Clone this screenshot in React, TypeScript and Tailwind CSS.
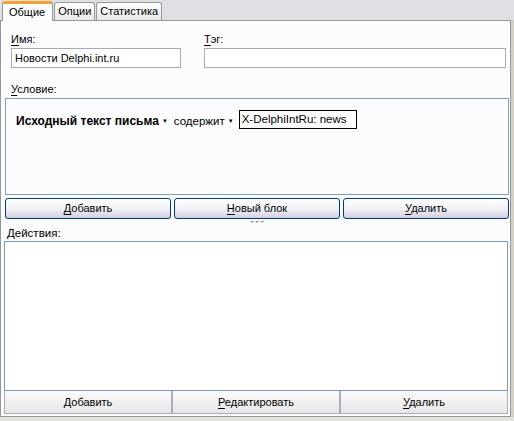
import React from "react";

// Small helper: underlines the mnemonic letter of a label.
function Hot({ k, rest }: { k: string; rest: string }) {
  return (
    <span>
      <span className="underline underline-offset-[2px]">{k}</span>
      {rest}
    </span>
  );
}

function XpButton({ k, rest }: { k: string; rest: string }) {
  return (
    <button
      type="button"
      className="flex-1 h-[21px] rounded-[3px] border border-[#003c74] bg-gradient-to-b from-white via-[#f2f2f6] to-[#d2cfe2] text-[11px] text-black leading-none"
    >
      <Hot k={k} rest={rest} />
    </button>
  );
}

function FlatButton({ k, rest, last }: { k: string; rest: string; last?: boolean }) {
  return (
    <button
      type="button"
      className={[
        "flex-1 h-full bg-gradient-to-b from-[#fbfbfb] to-[#e6e6e8] text-[11px] text-black leading-none",
        last ? "" : "border-r-2 border-[#a6adbd]",
      ].join(" ")}
    >
      <Hot k={k} rest={rest} />
    </button>
  );
}

function Tab({ label, active }: { label: string; active?: boolean }) {
  if (active) {
    return (
      <div className="relative z-10 h-[20px] pl-[6px] pr-[7px] -mb-px bg-[#fcfcfe] border-x border-[#919b9c] border-t-[3px] border-t-[#f5a330] rounded-t-[3px] flex items-center text-[11px]">
        {label}
      </div>
    );
  }
  return (
    <div className="h-[18px] px-[3px] bg-gradient-to-b from-white to-[#e8e8ea] border border-[#919b9c] border-b-0 rounded-t-[3px] flex items-center text-[11px]">
      {label}
    </div>
  );
}

export default function App() {
  return (
    <div
      className="w-[514px] h-[421px] bg-[#e0dfe3] flex flex-col text-black"
      style={{ fontFamily: '"Liberation Sans", Arial, sans-serif' }}
    >
      <div className="h-[20px] pl-[2px] flex items-end gap-px">
        <Tab label="Общие" active />
        <Tab label="Опции" />
        <Tab label="Статистика" />
      </div>

      <div className="flex-1 flex">
        <div className="w-[511px] h-[397px] border border-[#919b9c] bg-[#fcfcfe] flex flex-col">
          <div className="flex pl-[10px] pr-[4px] pt-[12px] gap-[23px]">
            <div className="w-[170px] flex flex-col">
              <div className="h-[15px] text-[11px] leading-[13px]">
                <Hot k="И" rest="мя:" />
              </div>
              <div className="h-[20px] border border-[#a5acb5] bg-white px-[3px] flex items-center text-[11px]">
                Новости Delphi.int.ru
              </div>
            </div>
            <div className="flex-1 flex flex-col">
              <div className="h-[15px] text-[11px] leading-[13px]">
                <Hot k="Т" rest="эг:" />
              </div>
              <div className="h-[20px] border border-[#a5acb5] bg-white" />
            </div>
          </div>

          <div className="px-[10px] mt-[15px] h-[15px] text-[11px] leading-[13px]">
            <Hot k="У" rest="словие:" />
          </div>

          <div className="ml-[4px] mr-[1px] h-[97px] border border-[#7f9db9] bg-[#fcfcfe] flex items-start pt-[11px] pl-[10px] text-[11px]">
            <span className="font-bold text-[12px] mt-[2px]">Исходный текст письма</span>
            <span className="text-[6px] ml-[3px] mt-[7px]">▼</span>
            <span className="ml-[6px] mt-[3px] text-[11.5px]">содержит</span>
            <span className="text-[6px] ml-[3px] mt-[7px]">▼</span>
            <div className="ml-[5px] w-[118px] h-[19px] border border-black bg-white px-[2px] flex items-center text-[11.5px]">
              X-DelphiIntRu: news
            </div>
          </div>

          <div className="ml-[4px] mr-[1px] mt-[3px] flex gap-[3px]">
            <XpButton k="Д" rest="обавить" />
            <XpButton k="Н" rest="овый блок" />
            <XpButton k="У" rest="далить" />
          </div>

          {/* splitter grip */}
          <div className="h-[5px] flex justify-center items-center gap-[2px] pl-[3px]">
            <span className="w-[3px] h-[2px] border-t border-l border-[#a0a0a0]" />
            <span className="w-[3px] h-[2px] border-t border-l border-[#a0a0a0]" />
            <span className="w-[3px] h-[2px] border-t border-l border-[#a0a0a0]" />
          </div>

          <div className="px-[6px] h-[17px] text-[11.5px] leading-[13px] pt-[3px]">Действия:</div>

          <div className="ml-[3px] mr-[2px] flex-1 border border-[#7f9db9] bg-white" />

          <div className="ml-[3px] mr-[2px] h-[23px] border-x border-b border-[#a6adbd] flex">
            <FlatButton k="Д" rest="обавить" />
            <FlatButton k="Р" rest="едактировать" />
            <FlatButton k="У" rest="далить" last />
          </div>
          <div className="h-[2px]" />
        </div>
        <div className="flex-1 bg-[#d4d0c8]" />
      </div>
      <div className="h-[4px] bg-[#e3e3de]" />
    </div>
  );
}
